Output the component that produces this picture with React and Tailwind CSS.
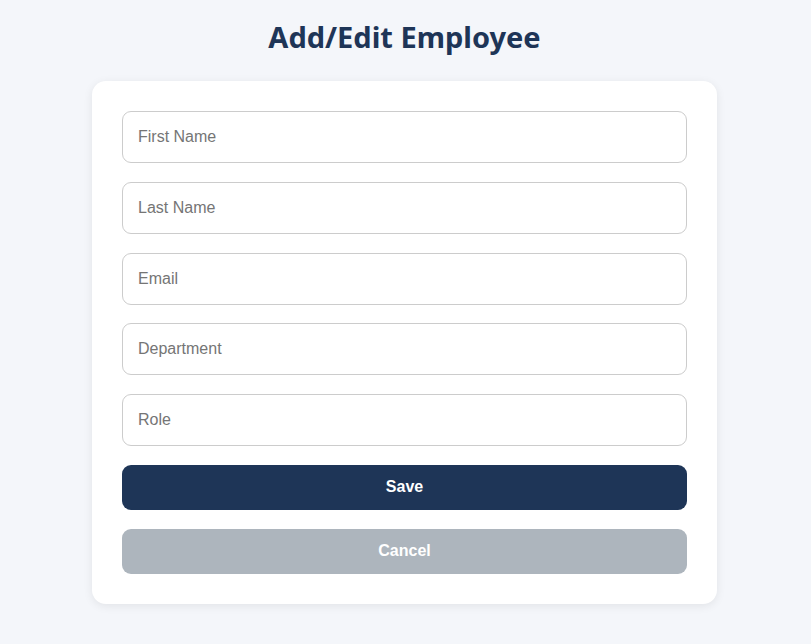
import React, { useState } from 'react'

function App() {
  const [form, setForm] = useState({ firstName: '', lastName: '', email: '', department: '', role: '' })

  const fields = [
    { name: 'firstName', placeholder: 'First Name' },
    { name: 'lastName', placeholder: 'Last Name' },
    { name: 'email', placeholder: 'Email' },
    { name: 'department', placeholder: 'Department' },
    { name: 'role', placeholder: 'Role' },
  ]

  return (
    <div className='min-h-screen bg-[#f4f6fa] pt-[18px] pr-[2px] font-["Liberation_Sans",Arial,sans-serif]'>
      <h1 className='text-center text-[29px] leading-[38px] font-bold text-[#1e3557] font-["Noto_Sans",sans-serif]'>Add/Edit Employee</h1>

      <div className='w-[625px] mx-auto mt-[25px] bg-white rounded-[14px] shadow-[0_2px_10px_rgba(0,0,0,0.08)] p-[30px] flex flex-col'>
        {fields.map((f) => (
          <input
            key={f.name}
            value={form[f.name]}
            onChange={(e) => setForm({ ...form, [f.name]: e.target.value })}
            placeholder={f.placeholder}
            className='h-[52px] mb-[18.75px] px-[15px] border border-[#cccccc] rounded-[9px] text-[16px] text-[#333] placeholder:text-[#757575] outline-none'
          />
        ))}
        <button className='h-[45px] rounded-[9px] bg-[#1e3557] text-white font-bold text-[16px] cursor-pointer'>Save</button>
        <button className='h-[45px] mt-[19px] rounded-[9px] bg-[#adb5bd] text-white font-bold text-[16px] cursor-pointer'>Cancel</button>
      </div>
    </div>
  )
}

export default App
